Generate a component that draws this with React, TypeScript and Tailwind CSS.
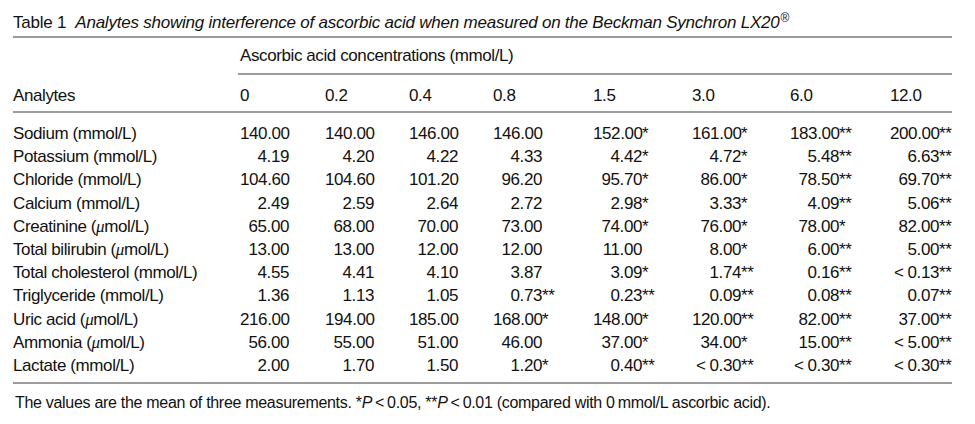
const rows: [string, string | null, string, string[]][] = [
  ["Sodium", null, "(mmol/L)", ["140.00", "140.00", "146.00", "146.00", "152.00*", "161.00*", "183.00**", "200.00**"]],
  ["Potassium", null, "(mmol/L)", ["4.19", "4.20", "4.22", "4.33", "4.42*", "4.72*", "5.48**", "6.63**"]],
  ["Chloride", null, "(mmol/L)", ["104.60", "104.60", "101.20", "96.20", "95.70*", "86.00*", "78.50**", "69.70**"]],
  ["Calcium", null, "(mmol/L)", ["2.49", "2.59", "2.64", "2.72", "2.98*", "3.33*", "4.09**", "5.06**"]],
  ["Creatinine", "μ", "mol/L)", ["65.00", "68.00", "70.00", "73.00", "74.00*", "76.00*", "78.00*", "82.00**"]],
  ["Total bilirubin", "μ", "mol/L)", ["13.00", "13.00", "12.00", "12.00", "11.00", "8.00*", "6.00**", "5.00**"]],
  ["Total cholesterol", null, "(mmol/L)", ["4.55", "4.41", "4.10", "3.87", "3.09*", "1.74**", "0.16**", "<0.13**"]],
  ["Triglyceride", null, "(mmol/L)", ["1.36", "1.13", "1.05", "0.73**", "0.23**", "0.09**", "0.08**", "0.07**"]],
  ["Uric acid", "μ", "mol/L)", ["216.00", "194.00", "185.00", "168.00*", "148.00*", "120.00**", "82.00**", "37.00**"]],
  ["Ammonia", "μ", "mol/L)", ["56.00", "55.00", "51.00", "46.00", "37.00*", "34.00*", "15.00**", "<5.00**"]],
  ["Lactate", null, "(mmol/L)", ["2.00", "1.70", "1.50", "1.20*", "0.40**", "<0.30**", "<0.30**", "<0.30**"]],
];

const concentrations = ["0", "0.2", "0.4", "0.8", "1.5", "3.0", "6.0", "12.0"];

const grid =
  "grid grid-cols-[227px_85px_84px_84px_100px_99px_98px_100px_62px]";

function Value({ v }: { v: string }) {
  const stars = v.match(/\*+$/)?.[0] ?? "";
  let num = v.slice(0, v.length - stars.length);
  const lt = num.startsWith("<");
  if (lt) num = num.slice(1);
  return (
    <div className="flex">
      <span className="w-[49px] shrink-0 whitespace-nowrap text-right">
        {lt && <span className="mr-[4px]">&lt;</span>}
        {num}
      </span>
      <span>{stars}</span>
    </div>
  );
}

function Rule({ className = "" }: { className?: string }) {
  return <div className={`h-[2px] bg-[#9c9c9c] ${className}`} />;
}

export default function App() {
  return (
    <div className="h-[424px] w-[975px] bg-white pl-[13px] pt-[10px] font-['Liberation_Sans',Arial,sans-serif] text-[17px] tracking-[-0.4px] text-[#111]">
      <div className="w-[939px]">
        <div className="flex h-[26px] items-center tracking-[-0.22px]">
          <span>Table 1</span>
          <span className="ml-[9px] italic">
            Analytes showing interference of ascorbic acid when measured on the Beckman Synchron LX20
            <sup className="ml-[1px] text-[12px] not-italic">®</sup>
          </span>
        </div>
        <Rule />
        <div className={`${grid} h-[35px] items-center`}>
          <div />
          <div className="col-span-8">Ascorbic acid concentrations (mmol/L)</div>
        </div>
        <Rule className="ml-[225px]" />
        <div className={`${grid} h-[36px] items-center pt-[5px]`}>
          <div>Analytes</div>
          {concentrations.map((c) => (
            <div key={c}>{c}</div>
          ))}
        </div>
        <Rule />
        <div className="pt-[8px] pb-[6px]">
          {rows.map(([name, mu, unit, vals]) => (
            <div key={name} className={`${grid} h-[23.2px] items-center`}>
              <div className="whitespace-nowrap">
                {name} {mu ? <>(<i className="font-['Liberation_Serif',serif]">{mu}</i>{unit}</> : unit}
              </div>
              {vals.map((v, i) => (
                <Value key={i} v={v} />
              ))}
              <div />
            </div>
          ))}
        </div>
        <Rule />
        <div className="mt-[7px] whitespace-nowrap pl-[2px] text-[16px] tracking-[-0.3px]">
          The values are the mean of three measurements. *<i>P</i>
          <span className="mx-[3px]">&lt;</span>0.05, **<i>P</i>
          <span className="mx-[3px]">&lt;</span>0.01 (compared with 0<span className="ml-[3px]" />mmol/L ascorbic acid).
        </div>
      </div>
    </div>
  );
}
